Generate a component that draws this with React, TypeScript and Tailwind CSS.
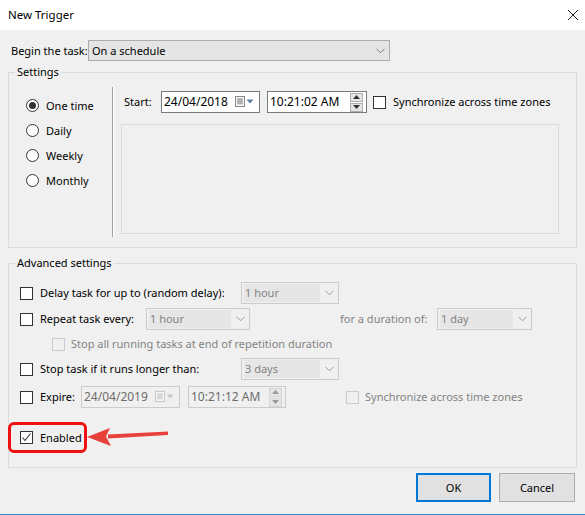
import React from "react";

const font = { fontFamily: '"Noto Sans", "Open Sans", sans-serif' };

function Chevron({ className = "" }: { className?: string }) {
  return (
    <svg width="9" height="6" viewBox="0 0 9 6" className={className}>
      <path d="M0.5 0.8 L4.5 4.8 L8.5 0.8" fill="none" stroke="currentColor" strokeWidth="1" />
    </svg>
  );
}

function Combo({ value, w, disabled }: { value: string; w: number; disabled?: boolean }) {
  return (
    <div
      className={
        "flex h-[22px] items-center border pl-[2px] " +
        (disabled ? "border-[#cccccc] bg-[#f0f0f0] text-[#838383]" : "border-[#adadad] bg-[#e5e5e5] text-black")
      }
      style={{ width: w }}
    >
      <div className={"flex h-[18px] flex-1 items-center pl-[1px] " + (disabled ? "bg-[#e6e6e6]" : "")}>{value}</div>
      <div className="flex w-[18px] justify-center text-[#9a9a9a]">
        <Chevron />
      </div>
    </div>
  );
}

function Check({ checked, disabled }: { checked?: boolean; disabled?: boolean }) {
  return (
    <div
      className={
        "flex h-[13px] w-[13px] shrink-0 items-center justify-center border " +
        (disabled ? "border-[#cccccc] bg-[#f0f0f0]" : "border-[#333333] bg-white")
      }
    >
      {checked && (
        <svg width="11" height="11" viewBox="0 0 11 11">
          <path d="M1.5 5.5 L4 8.5 L9.5 1.5" fill="none" stroke="#333333" strokeWidth="1.1" />
        </svg>
      )}
    </div>
  );
}

function Radio({ checked }: { checked?: boolean }) {
  return (
    <div className="flex h-[13px] w-[13px] shrink-0 items-center justify-center rounded-full border border-[#333333] bg-white">
      {checked && <div className="h-[7px] w-[7px] rounded-full bg-[#333333]" />}
    </div>
  );
}

function CalIcon({ disabled }: { disabled?: boolean }) {
  const c = disabled ? "#c8c8c8" : "#8a8a8a";
  const t = disabled ? "#c8c8c8" : "#5b7fa6";
  return (
    <svg width="20" height="12" viewBox="0 0 20 12">
      <rect x="0.5" y="0.5" width="9" height="10" fill="#f4f4f4" stroke={c} />
      <path d="M2.5 3 H7.5 M2.5 5 H7.5 M2.5 7 H7.5 M3 2.5 V8.5 M5 2.5 V8.5 M7 2.5 V8.5" stroke={c} strokeWidth="0.8" />
      <path d="M11.5 3.5 L18.5 3.5 L15 7.5 Z" fill={t} />
    </svg>
  );
}

function DateBox({ value, disabled }: { value: string; disabled?: boolean }) {
  return (
    <div
      className={
        "flex h-[22px] w-[99px] items-center justify-between border pl-[2px] pr-[4px] " +
        (disabled ? "border-[#cccccc] bg-[#f0f0f0] text-[#6d6d6d]" : "border-[#7a7a7a] bg-white text-black")
      }
    >
      <span className="text-[12px]">{value}</span>
      <CalIcon disabled={disabled} />
    </div>
  );
}

function Spinner({ disabled }: { disabled?: boolean }) {
  const b = disabled ? "border-[#d4d4d4]" : "border-[#adadad]";
  const f = disabled ? "#9a9a9a" : "#333333";
  return (
    <div className="flex flex-col gap-[1px]">
      <div className={"flex h-[9px] w-[13px] items-center justify-center border bg-[#e5e5e5] " + b}>
        <svg width="7" height="4" viewBox="0 0 7 4">
          <path d="M0 4 L3.5 0 L7 4 Z" fill={f} />
        </svg>
      </div>
      <div className={"flex h-[9px] w-[13px] items-center justify-center border bg-[#e5e5e5] " + b}>
        <svg width="7" height="4" viewBox="0 0 7 4">
          <path d="M0 0 L3.5 4 L7 0 Z" fill={f} />
        </svg>
      </div>
    </div>
  );
}

function TimeBox({ value, disabled, w }: { value: string; disabled?: boolean; w: number }) {
  return (
    <div
      className={
        "flex h-[22px] items-center justify-between border pl-[2px] pr-[3px] " +
        (disabled ? "border-[#cccccc] bg-[#f0f0f0] text-[#6d6d6d]" : "border-[#7a7a7a] bg-white text-black")
      }
      style={{ width: w }}
    >
      <span className="text-[12px]">{value}</span>
      <Spinner disabled={disabled} />
    </div>
  );
}

export default function App() {
  return (
    <div
      className="relative h-[515px] w-[585px] overflow-hidden whitespace-nowrap border-b border-[#2b8de0] bg-[#f0f0f0] text-[11px] leading-[16px] text-black"
      style={font}
    >
      {/* title bar */}
      <div className="flex h-[30px] items-center justify-between bg-white pl-[8px] pr-[4px]">
        <span className="text-[11.5px]">New Trigger</span>
        <svg width="12" height="12" viewBox="0 0 12 12" className="mr-[2px]">
          <path d="M1 1 L11 11 M11 1 L1 11" stroke="#222" strokeWidth="1" />
        </svg>
      </div>

      <div className="px-[8px]">
        {/* begin the task */}
        <div className="mt-[10px] flex h-[21px] items-center">
          <span className="ml-[3px] w-[77px]">Begin the task:</span>
          <div className="flex h-[21px] w-[302px] items-center justify-between border border-[#adadad] bg-[#e5e5e5] pl-[3px] pr-[4px]">
            <span>On a schedule</span>
            <Chevron className="text-[#7a7a7a]" />
          </div>
        </div>

        {/* settings */}
        <fieldset className="mt-[3px] h-[184px] border border-[#dcdcdc]">
          <legend className="ml-[6px] px-[2px]">Settings</legend>
          <div className="flex">
            <div className="flex w-[103px] flex-col pl-[17px] pt-[13px]">
              {["One time", "Daily", "Weekly", "Monthly"].map((l, i) => (
                <div key={l} className="flex h-[25px] items-center gap-[7px]">
                  <Radio checked={i === 0} />
                  <span>{l}</span>
                </div>
              ))}
            </div>
            <div className="mt-[7px] h-[150px] w-[2px] border-l border-r border-l-[#a0a0a0] border-r-white" />
            <div className="flex flex-col">
              <div className="ml-[10px] mt-[11px] flex h-[22px] items-center">
                <span className="w-[37px]">Start:</span>
                <DateBox value="24/04/2018" />
                <div className="ml-[7px]">
                  <TimeBox value="10:21:02 AM" w={100} />
                </div>
                <div className="ml-[6px] flex items-center gap-[7px]">
                  <Check />
                  <span>Synchronize across time zones</span>
                </div>
              </div>
              <div className="ml-[7px] mt-[11px] h-[110px] w-[438px] border border-[#dadada]" />
            </div>
          </div>
        </fieldset>

        {/* advanced settings */}
        <fieldset className="mt-[7px] h-[213px] border border-[#dcdcdc]">
          <legend className="ml-[6px] px-[2px]">Advanced settings</legend>
          <div className="flex flex-col pl-[11px]">
            <div className="mt-[11px] flex h-[22px] items-center">
              <Check />
              <span className="ml-[7px] w-[201px]">Delay task for up to (random delay):</span>
              <Combo value="1 hour" w={98} disabled />
            </div>
            <div className="mt-[4px] flex h-[22px] items-center">
              <Check />
              <span className="ml-[7px] w-[106px]">Repeat task every:</span>
              <Combo value="1 hour" w={104} disabled />
              <span className="ml-[90px] w-[97px] text-[#838383]">for a duration of:</span>
              <Combo value="1 day" w={95} disabled />
            </div>
            <div className="mt-[4px] flex h-[20px] items-center pl-[32px]">
              <Check disabled />
              <span className="ml-[6px] text-[#838383]">Stop all running tasks at end of repetition duration</span>
            </div>
            <div className="mt-[4px] flex h-[22px] items-center">
              <Check />
              <span className="ml-[7px] w-[201px]">Stop task if it runs longer than:</span>
              <Combo value="3 days" w={98} disabled />
            </div>
            <div className="mt-[6px] flex h-[22px] items-center">
              <Check />
              <span className="ml-[7px] w-[41px]">Expire:</span>
              <DateBox value="24/04/2019" disabled />
              <div className="ml-[8px]">
                <TimeBox value="10:21:12 AM" w={98} disabled />
              </div>
              <div className="ml-[60px] flex items-center gap-[6px]">
                <Check disabled />
                <span className="text-[#838383]">Synchronize across time zones</span>
              </div>
            </div>
            <div className="-ml-[12px] mt-[14px] flex h-[31px] w-[79px] items-center rounded-[6px] border-[3px] border-[#ee1111] pl-[9px]">
              <Check checked />
              <span className="ml-[7px]">Enabled</span>
            </div>
          </div>
        </fieldset>

        {/* buttons */}
        <div className="mt-[5px] flex justify-end gap-[8px] pr-[2px]">
          <button className="h-[29px] w-[75px] border-2 border-[#0078d7] bg-[#e1e1e1]">OK</button>
          <button className="h-[29px] w-[76px] border border-[#adadad] bg-[#e1e1e1]">Cancel</button>
        </div>
      </div>

      {/* annotation arrow */}
      <svg className="absolute left-[86px] top-[424px]" width="86" height="24" viewBox="0 0 86 24">
        <path d="M22 10.5 L82 7.5 L82 11 L22 14.5 Z" fill="#e8413c" />
        <path d="M1 13 L24 4 L20 12.5 L25 22 Z" fill="#e8413c" />
      </svg>
    </div>
  );
}
